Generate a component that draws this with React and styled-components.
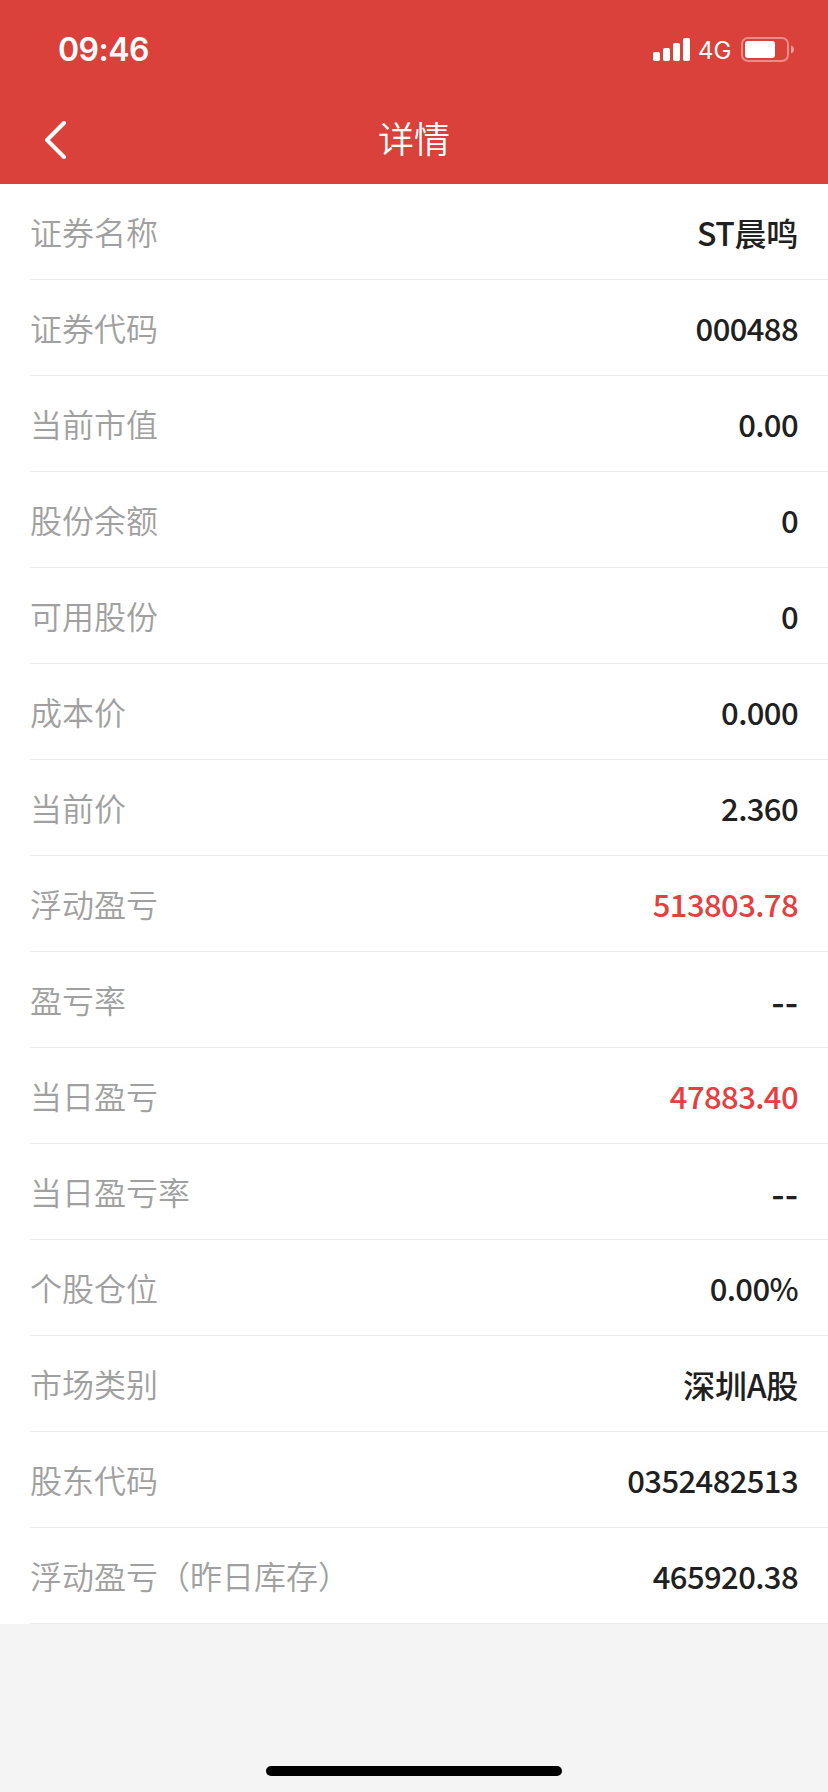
import React from 'react'
import styled, { createGlobalStyle } from 'styled-components'

const rows = [
  { label: '证券名称', value: 'ST晨鸣', kind: 'name' },
  { label: '证券代码', value: '000488' },
  { label: '当前市值', value: '0.00' },
  { label: '股份余额', value: '0' },
  { label: '可用股份', value: '0' },
  { label: '成本价', value: '0.000' },
  { label: '当前价', value: '2.360' },
  { label: '浮动盈亏', value: '513803.78', up: true },
  { label: '盈亏率', value: '--', kind: 'empty' },
  { label: '当日盈亏', value: '47883.40', up: true },
  { label: '当日盈亏率', value: '--', kind: 'empty' },
  { label: '个股仓位', value: '0.00%' },
  { label: '市场类别', value: '深圳A股', kind: 'name' },
  { label: '股东代码', value: '0352482513' },
  { label: '浮动盈亏（昨日库存）', value: '465920.38' },
]

function StatusBar() {
  return (
    <Status>
      <Time>09:46</Time>
      <Indicators>
        <svg width="38" height="23" viewBox="0 0 38 23" fill="#fff">
          <rect x="0" y="14" width="7" height="9" rx="1.8" />
          <rect x="10" y="10" width="7" height="13" rx="1.8" />
          <rect x="20" y="5" width="7" height="18" rx="1.8" />
          <rect x="30" y="0" width="7" height="23" rx="1.8" />
        </svg>
        <Network>4G</Network>
        <svg width="54" height="26" viewBox="0 0 54 26">
          <rect x="1" y="1" width="46" height="23" rx="6" fill="none" stroke="#fff" strokeOpacity="0.4" strokeWidth="2" />
          <rect x="4" y="4" width="30" height="17" rx="3" fill="#fff" />
          <path d="M50 8.500c1.800.6 3 2.200 3 4s-1.200 3.400-3 4z" fill="#fff" fillOpacity="0.5" />
        </svg>
      </Indicators>
    </Status>
  )
}

export default function App() {
  return (
    <Page>
      <GlobalStyle />
      <Header>
        <StatusBar />
        <NavBar>
          <Back aria-label="返回">
            <svg width="22" height="38" viewBox="0 0 22 38" fill="none" stroke="#fff" strokeWidth="4" strokeLinecap="round" strokeLinejoin="round">
              <path d="M19 2L2 19L19 36" />
            </svg>
          </Back>
          <Title>详情</Title>
        </NavBar>
      </Header>
      <List>
        {rows.map(row => (
          <Row key={row.label}>
            <Label>{row.label}</Label>
            {row.kind === 'empty'
              ? <Empty>{row.value}</Empty>
              : <Value $up={row.up} $kind={row.kind}>{row.value}</Value>}
          </Row>
        ))}
      </List>
      <Footer>
        <HomeIndicator />
      </Footer>
    </Page>
  )
}

const GlobalStyle = createGlobalStyle`
* {
  box-sizing: border-box;
}
body {
  margin: 0;
  background: #f4f4f4;
  font-family: 'Noto Sans CJK SC', sans-serif;
}
`

const Page = styled.div`
display: flex;
flex-direction: column;
width: 828px;
height: 1792px;
background: #f4f4f4;
`

const Header = styled.header`
height: 184px;
background: #da413a;
color: #fff;
`

const Status = styled.div`
display: flex;
justify-content: space-between;
height: 96px;
padding: 0 33px 0 58px;
font-family: Inter, sans-serif;
`

const Time = styled.span`
padding-top: 30px;
font-size: 32px;
font-weight: 600;
line-height: 39px;
letter-spacing: -0.5px;
`

const Indicators = styled.div`
display: flex;
align-items: center;
height: 99px;
`

const Network = styled.span`
width: 43px;
margin: 2px 0 0 7px;
font-size: 24px;
line-height: 30px;
`

const NavBar = styled.nav`
display: grid;
grid-template-columns: 92px 1fr 92px;
align-items: center;
height: 88px;
`

const Back = styled.button`
display: flex;
padding: 0 0 0 45px;
border: 0;
background: none;
`

const Title = styled.h1`
margin: 0;
padding-bottom: 6px;
font-size: 36px;
font-weight: 350;
line-height: 52px;
text-align: center;
`

const List = styled.main`
background: #fff;
`

const Row = styled.div`
display: flex;
justify-content: space-between;
align-items: center;
height: 96px;
margin-left: 30px;
padding-right: 30px;
border-bottom: 1px solid #ebebeb;
`

const Label = styled.span`
padding-bottom: 1px;
color: #a0a0a0;
font-size: 32px;
font-weight: 350;
line-height: 46px;
`

const Value = styled.span`
padding-top: 1px;
color: ${p => (p.$up ? '#e63f41' : '#202020')};
font-size: ${p => (p.$kind === 'name' ? '32px' : '31px')};
font-weight: 500;
line-height: 46px;
letter-spacing: ${p => (p.$kind === 'name' ? '-0.3px' : '-0.6px')};
`

const Empty = styled.span`
padding-top: 8px;
color: #202020;
font-family: Inter, sans-serif;
font-size: 30px;
font-weight: 600;
line-height: 46px;
letter-spacing: -0.5px;
`

const Footer = styled.footer`
display: flex;
flex: 1;
justify-content: center;
align-items: flex-end;
padding-bottom: 16px;
`

const HomeIndicator = styled.div`
width: 296px;
height: 10px;
border-radius: 5px;
background: #000;
`
